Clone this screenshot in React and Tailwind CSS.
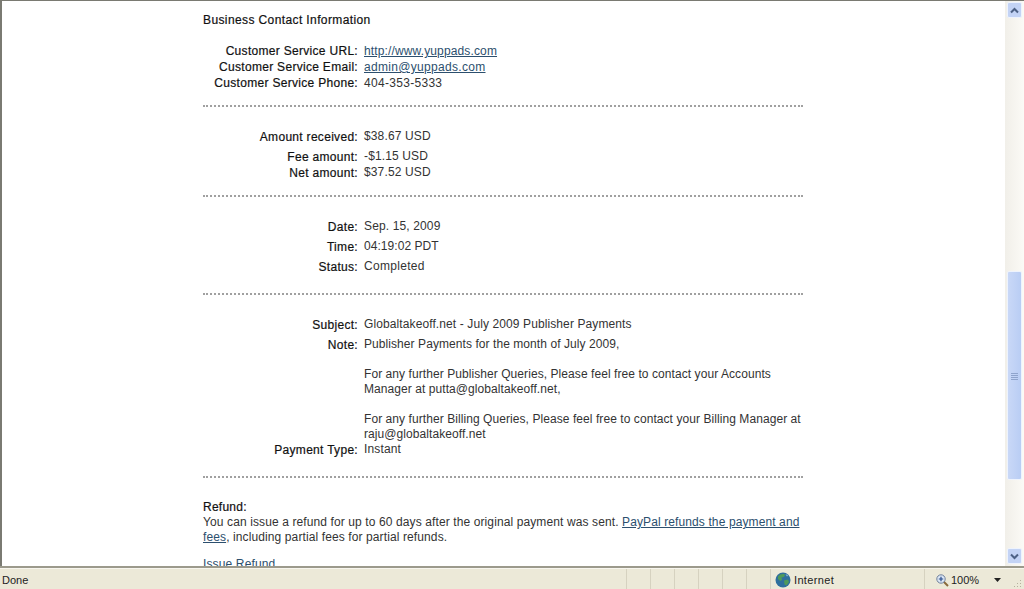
import React from "react";

// Ligne label / valeur du détail de transaction
function Row({ label, children, className = "", valueClass = "tracking-[0.135px]" }) {
    return (
        <div className={"flex gap-[6px] " + className}>
            <div className="w-[155px] shrink-0 text-right text-[#111] leading-[15px] pt-px tracking-[0.3px] [-webkit-text-stroke:0.2px_#111]">{label}</div>
            <div className={"flex-1 text-[#333] leading-[15px] " + valueClass}>{children}</div>
        </div>
    );
}

function Divider({ className = "" }) {
    return <div className={"border-t-2 border-dotted border-[#a0a0a0] " + className}></div>;
}

function Link({ children }) {
    return <span className="text-[#2c4f6e] underline">{children}</span>;
}

function ScrollButton({ up }) {
    return (
        <div className="h-[16px] w-[15px] ml-[1px] rounded-[2px] border border-[#eef3fd] bg-[#c3d3f5] flex items-center justify-center">
            <svg width="9" height="7" viewBox="0 0 9 7">
                <path d={up ? "M1 5.5L4.5 2L8 5.5" : "M1 1.5L4.5 5L8 1.5"} fill="none" stroke="#4d6185" strokeWidth="2" />
            </svg>
        </div>
    );
}

function Scrollbar() {
    return (
        <div className="w-[19px] shrink-0 flex flex-col items-start pl-[1px] pt-[1px] pb-[2px] bg-gradient-to-r from-[#f1efe9] to-[#fbfaf6]">
            <ScrollButton up />
            <div className="h-[253px]"></div>
            <div className="relative h-[209px] w-[15px] ml-[1px] rounded-[2px] border border-[#eef3fd] bg-gradient-to-r from-[#c9d8f7] to-[#b9cdf4]">
                <div className="absolute left-[3px] top-[101px] w-[7px] flex flex-col gap-px">
                    <div className="h-px bg-[#8fa4cc]"></div>
                    <div className="h-px bg-[#8fa4cc]"></div>
                    <div className="h-px bg-[#8fa4cc]"></div>
                    <div className="h-px bg-[#8fa4cc]"></div>
                </div>
            </div>
            <div className="flex-1"></div>
            <ScrollButton />
        </div>
    );
}

function Globe() {
    return (
        <svg width="16" height="16" viewBox="0 0 16 16">
            <circle cx="8" cy="8" r="7.5" fill="#2f6f9e" />
            <path d="M3 4.5C5 2 8 1.5 10 2.5L9 5L6.5 5.5L7 8L5 9L3 7Z" fill="#4f9a5a" />
            <path d="M9 8.5L13 7.5L14 10L11.5 13.5L9.5 12.5Z" fill="#4f9a5a" />
            <path d="M10.5 2L13 3.5L12 4.5Z" fill="#9cc6de" />
        </svg>
    );
}

function ZoomIcon() {
    return (
        <svg width="13" height="13" viewBox="0 0 13 13">
            <path d="M7.5 7.5L12 12" stroke="#8a6a3c" strokeWidth="2" />
            <circle cx="5" cy="5" r="4.2" fill="#dbe6f5" stroke="#6f7f99" />
            <path d="M2.8 5H7.2M5 2.8V7.2" stroke="#2c4f8e" strokeWidth="1.2" />
        </svg>
    );
}

function StatusBar() {
    const cells = [0, 1, 2, 3, 4, 5];
    return (
        <div className="h-[21px] shrink-0 flex bg-[#ece9d8] border-t border-[#f8f6ee] text-[11px] text-[#222]">
            <div className="w-[626px] pl-[2px] pt-[2px] flex items-center">Done</div>
            {cells.map(c => (
                <div key={c} className="w-[24px] border-l border-[#d6d2c0]"></div>
            ))}
            <div className="w-[154px] border-l border-[#d6d2c0] flex items-center pl-[4px] pt-[2px] gap-[3px]">
                <Globe />
                <span className="tracking-[0.35px]">Internet</span>
            </div>
            <div className="flex-1 border-l border-[#d6d2c0] flex items-center pl-[11px] pt-[2px]">
                <ZoomIcon />
                <span className="ml-[2px]">100%</span>
                <svg className="ml-[15px]" width="7" height="4" viewBox="0 0 7 4"><path d="M0 0H7L3.5 4Z" fill="#222" /></svg>
                <svg className="ml-[11px] mt-[8px]" width="10" height="10" viewBox="0 0 10 10">
                    <path d="M8 1h1v1H8zM5 4h1v1H5zM8 4h1v1H8zM2 7h1v1H2zM5 7h1v1H5zM8 7h1v1H8z" fill="#b5b19d" />
                </svg>
            </div>
        </div>
    );
}

export default function App() {
    return (
        <div className="w-[1024px] h-[589px] flex flex-col overflow-hidden bg-white text-[12px]" style={{ fontFamily: '"Liberation Sans", Arial, sans-serif' }}>
            <div className="flex-1 min-h-0 flex border-t border-[#7a7a72] border-b-2 border-b-[#9c9a8c]">
                <div className="flex-1 min-w-0 border-l-2 border-[#7a7a72] overflow-hidden pl-[201px]">
                    <div className="w-[600px] pt-[11px]">
                        <div className="text-[#111] leading-4 tracking-[0.39px] [-webkit-text-stroke:0.2px_#111]">Business Contact Information</div>

                        <Row label="Customer Service URL:" className="mt-[15px]" valueClass="pt-px tracking-[0.135px]"><Link>http://www.yuppads.com</Link></Row>
                        <Row label="Customer Service Email:" valueClass="pt-px tracking-[0.31px]"><Link>admin@yuppads.com</Link></Row>
                        <Row label="Customer Service Phone:" valueClass="pt-px tracking-[0.3px]">404-353-5333</Row>
                        <Divider className="mt-[14px]" />

                        <Row label="Amount received:" className="mt-[22px]">$38.67 USD</Row>
                        <Row label="Fee amount:" className="mt-[4px]">-$1.15 USD</Row>
                        <Row label="Net amount:">$37.52 USD</Row>
                        <Divider className="mt-[14px]" />

                        <Row label="Date:" className="mt-[22px]">Sep. 15, 2009</Row>
                        <Row label="Time:" className="mt-[4px]" valueClass="tracking-[0.05px]">04:19:02 PDT</Row>
                        <Row label="Status:" className="mt-[4px]" valueClass="tracking-[0.3px]">Completed</Row>
                        <Divider className="mt-[18px]" />

                        <Row label="Subject:" className="mt-[22px]" valueClass="tracking-[0.105px]">Globaltakeoff.net - July 2009 Publisher Payments</Row>
                        <Row label="Note:" className="mt-[4px]" valueClass="tracking-[0.07px]">
                            <p>Publisher Payments for the month of July 2009,</p>
                            <p className="mt-[15px]">For any further Publisher Queries, Please feel free to contact your Accounts Manager at putta@globaltakeoff.net,</p>
                            <p className="mt-[15px]">For any further Billing Queries, Please feel free to contact your Billing Manager at raju@globaltakeoff.net</p>
                        </Row>
                        <Row label="Payment Type:">Instant</Row>
                        <Divider className="mt-[18px]" />

                        <div className="mt-[22px] text-[#111] leading-[15px] tracking-[0.24px] [-webkit-text-stroke:0.2px_#111]">Refund:</div>
                        <p className="text-[#333] leading-[15px] tracking-[0.11px]">
                            You can issue a refund for up to 60 days after the original payment was sent. <Link>PayPal refunds the payment and fees</Link>, including partial fees for partial refunds.
                        </p>
                        <div className="mt-[12px] leading-[15px] tracking-[0.135px]"><Link>Issue Refund</Link></div>
                    </div>
                </div>
                <Scrollbar />
            </div>
            <StatusBar />
        </div>
    );
}
